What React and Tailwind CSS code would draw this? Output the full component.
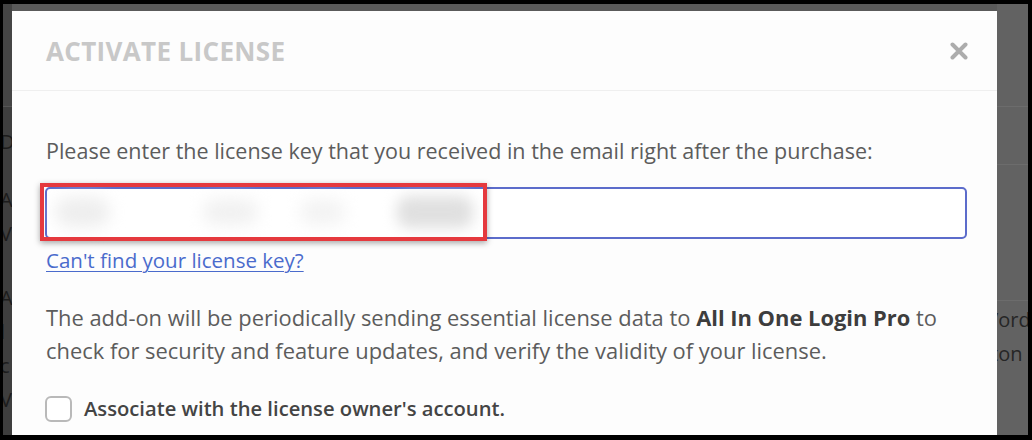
import React from 'react';

const sans = { fontFamily: '"Open Sans", "Noto Sans", sans-serif' };

function LeftStrip() {
  return (
    <div className="w-[9px] shrink-0 bg-[#3e3e3e] overflow-hidden text-[#1c1c1c] text-[20px] leading-[34px]">
      <div className="h-[103px] bg-[#454545] border-b border-[#555]" />
      <div className="-ml-[3px] pt-[18px]">
        <div>D</div>
        <div className="mt-[24px]">A</div>
        <div>V</div>
        <div className="mt-[30px]">A</div>
        <div>l</div>
        <div>c</div>
        <div>V</div>
      </div>
    </div>
  );
}

function RightStrip() {
  return (
    <div className="w-[31px] shrink-0 bg-[#626262] overflow-hidden text-[#262626] text-[20px] leading-[34px]">
      <div className="h-[103px] border-b border-[#6c6c6c]" />
      <div className="h-[58px] border-b border-[#6c6c6c]" />
      <div className="h-[136px] border-b border-[#6c6c6c]" />
      <div className="-ml-[6px] pt-[2px] whitespace-nowrap">
        <div>/ord</div>
        <div>ton</div>
      </div>
    </div>
  );
}

function LicenseField() {
  return (
    <div className="relative mt-[20px] -ml-[1px]">
      <div className="h-[52px] rounded-[5px] border-2 border-[#5c6ccb] bg-white" />
      <div className="absolute left-[10px] top-[10px] w-[55px] h-[30px] rounded-full bg-[#eeeeee] blur-[8px]" />
      <div className="absolute left-[158px] top-[12px] w-[55px] h-[26px] rounded-full bg-[#f1f1f1] blur-[8px]" />
      <div className="absolute left-[255px] top-[12px] w-[45px] h-[26px] rounded-full bg-[#f3f3f3] blur-[8px]" />
      <div className="absolute left-[352px] top-[9px] w-[76px] h-[32px] rounded-[12px] bg-[#e0e0e0] blur-[7px]" />
      <div className="absolute -left-[5px] -top-[4px] w-[447px] h-[58px] border-[4px] border-[#e5393e] shadow-[0_2px_6px_rgba(0,0,0,0.35)]" />
    </div>
  );
}

export default function App() {
  return (
    <div className="w-[1032px] h-[440px] bg-black pt-[4px] pl-[3px] pr-[4px] pb-[5px] overflow-hidden" style={sans}>
      <div className="flex h-full bg-[#5a5a5a]">
        <LeftStrip />
        <div className="flex-1 pt-[7px] overflow-hidden">
          <div className="bg-[#fdfdfd] h-full">
            <div className="h-[80px] flex items-center justify-between pl-[34px] pr-[29px] border-b border-[#efefef]">
              <h2 className="text-[26px] font-bold tracking-[0.35px] text-[#c8c8c8] leading-none">ACTIVATE LICENSE</h2>
              <svg width="18" height="18" viewBox="0 0 18 18" className="text-[#acacac]">
                <path d="M2.5 2.5 L15.5 15.5 M15.5 2.5 L2.5 15.5" stroke="currentColor" strokeWidth="4" strokeLinecap="round" />
              </svg>
            </div>
            <div className="pt-[43px] pl-[34px] pr-[30px] text-[21.5px] leading-[33px] text-[#5c5c5c]">
              <p>Please enter the license key that you received in the email right after the purchase:</p>
              <LicenseField />
              <a href="#" className="block mt-[5px] text-[20.5px] text-[#4a6bcc] underline underline-offset-[3px] decoration-1 w-fit">
                Can't find your license key?
              </a>
              <p className="mt-[24px] text-[21.9px]">
                The add-on will be periodically sending essential license data to{' '}
                <strong className="font-bold text-[#3d3d3d]">All In One Login Pro</strong> to check for security and
                feature updates, and verify the validity of your license.
              </p>
              <label className="mt-[25px] -ml-[1px] flex items-center gap-[12px]">
                <span className="w-[27px] h-[26px] rounded-[6px] border-2 border-[#b9b9b9] bg-white shrink-0" />
                <span className="font-semibold text-[20.2px] text-[#444444]">Associate with the license owner's account.</span>
              </label>
            </div>
          </div>
        </div>
        <RightStrip />
      </div>
    </div>
  );
}
